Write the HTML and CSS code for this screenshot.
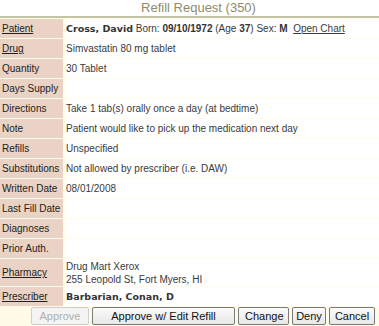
FILE: index.html
```html
<!DOCTYPE html>
<html>
<head>
<meta charset="utf-8">
<link rel="stylesheet" href="styles.css">
</head>
<body>
<div class="win">
  <div class="title">Refill Request (350)</div>
  <div class="grid">
    <div class="lbl"><u>Patient</u></div><div class="val"><b class="bold">Cross, David</b>&nbsp;Born: <b>09/10/1972</b> (Age <b>37</b>) Sex: <b>M</b>&nbsp;&nbsp;<u>Open Chart</u></div>
    <div class="lbl"><u>Drug</u></div><div class="val">Simvastatin 80 mg tablet</div>
    <div class="lbl">Quantity</div><div class="val">30 Tablet</div>
    <div class="lbl">Days Supply</div><div class="val"></div>
    <div class="lbl">Directions</div><div class="val">Take 1 tab(s) orally once a day (at bedtime)</div>
    <div class="lbl">Note</div><div class="val">Patient would like to pick up the medication next day</div>
    <div class="lbl">Refills</div><div class="val">Unspecified</div>
    <div class="lbl">Substitutions</div><div class="val">Not allowed by prescriber (i.e. DAW)</div>
    <div class="lbl">Written Date</div><div class="val">08/01/2008</div>
    <div class="lbl">Last Fill Date</div><div class="val"></div>
    <div class="lbl">Diagnoses</div><div class="val"></div>
    <div class="lbl">Prior Auth.</div><div class="val"></div>
    <div class="lbl tall"><u>Pharmacy</u></div><div class="val tall multi">Drug Mart Xerox<br>255 Leopold St, Fort Myers, HI</div>
    <div class="lbl"><u>Prescriber</u></div><div class="val"><b class="bold">Barbarian, Conan, D</b></div>
  </div>
  <div class="buttons">
    <button class="btn disabled">Approve</button>
    <button class="btn wide">Approve w/ Edit Refill</button>
    <button class="btn">Change</button>
    <button class="btn">Deny</button>
    <button class="btn">Cancel</button>
  </div>
</div>
</body>
</html>
```
FILE: styles.css
```css
html, body {
  margin: 0;
  padding: 0;
  background: #fffde8;
}
.win {
  width: 379px;
  height: 326px;
  font-family: "Liberation Sans", Arial, sans-serif;
  font-size: 10px;
  color: #333;
  background: #fffbe6;
}
.title {
  height: 16px;
  background: #ffffff;
  border-bottom: 2px solid #c2c4a6;
  text-align: center;
  font-size: 13px;
  line-height: 16px;
  color: #8c8c6c;
  padding-left: 18px;
}
.grid {
  display: grid;
  grid-template-columns: 63px 1fr;
  column-gap: 2px;
  row-gap: 1px;
  padding-top: 1px;
}
.lbl {
  height: 19px;
  background: #ead2c4;
  color: #222;
  padding-left: 2px;
  line-height: 19px;
  white-space: nowrap;
  overflow: hidden;
}
.lbl u { color: #222; }
.val {
  height: 19px;
  background: #ffffff;
  padding-left: 1px;
  line-height: 19px;
  white-space: nowrap;
  color: #3a3a3a;
  overflow: hidden;
}
.val b { color: #333; }
.bold {
  font-family: "DejaVu Sans", Verdana, sans-serif;
  font-size: 9.5px;
  color: #333;
}
.grid .tall {
  height: 27px;
  line-height: 27px;
}
.grid .multi {
  line-height: 13px;
  padding-top: 1px;
  box-sizing: border-box;
}
.buttons {
  display: flex;
  justify-content: flex-end;
  gap: 3px;
  padding: 1px 4px 0 0;
}
.btn {
  height: 18px;
  font-family: "Liberation Sans", Arial, sans-serif;
  font-size: 11px;
  color: #111;
  background: linear-gradient(#fafafa, #e8e8e8);
  border: 1px solid #7a7a7a;
  border-radius: 2px;
  padding: 0 6px;
  margin: 0;
  line-height: 16px;
}
.btn.disabled {
  color: #b0b0b0;
  border-color: #cfcfcf;
  background: #f4f4f4;
  width: 58px;
}
.btn.wide { width: 143px; }
.btn:nth-child(3) { width: 51px; }
.btn:nth-child(4) { width: 34px; padding: 0; }
.btn:nth-child(5) { width: 46px; padding: 0; }
```
